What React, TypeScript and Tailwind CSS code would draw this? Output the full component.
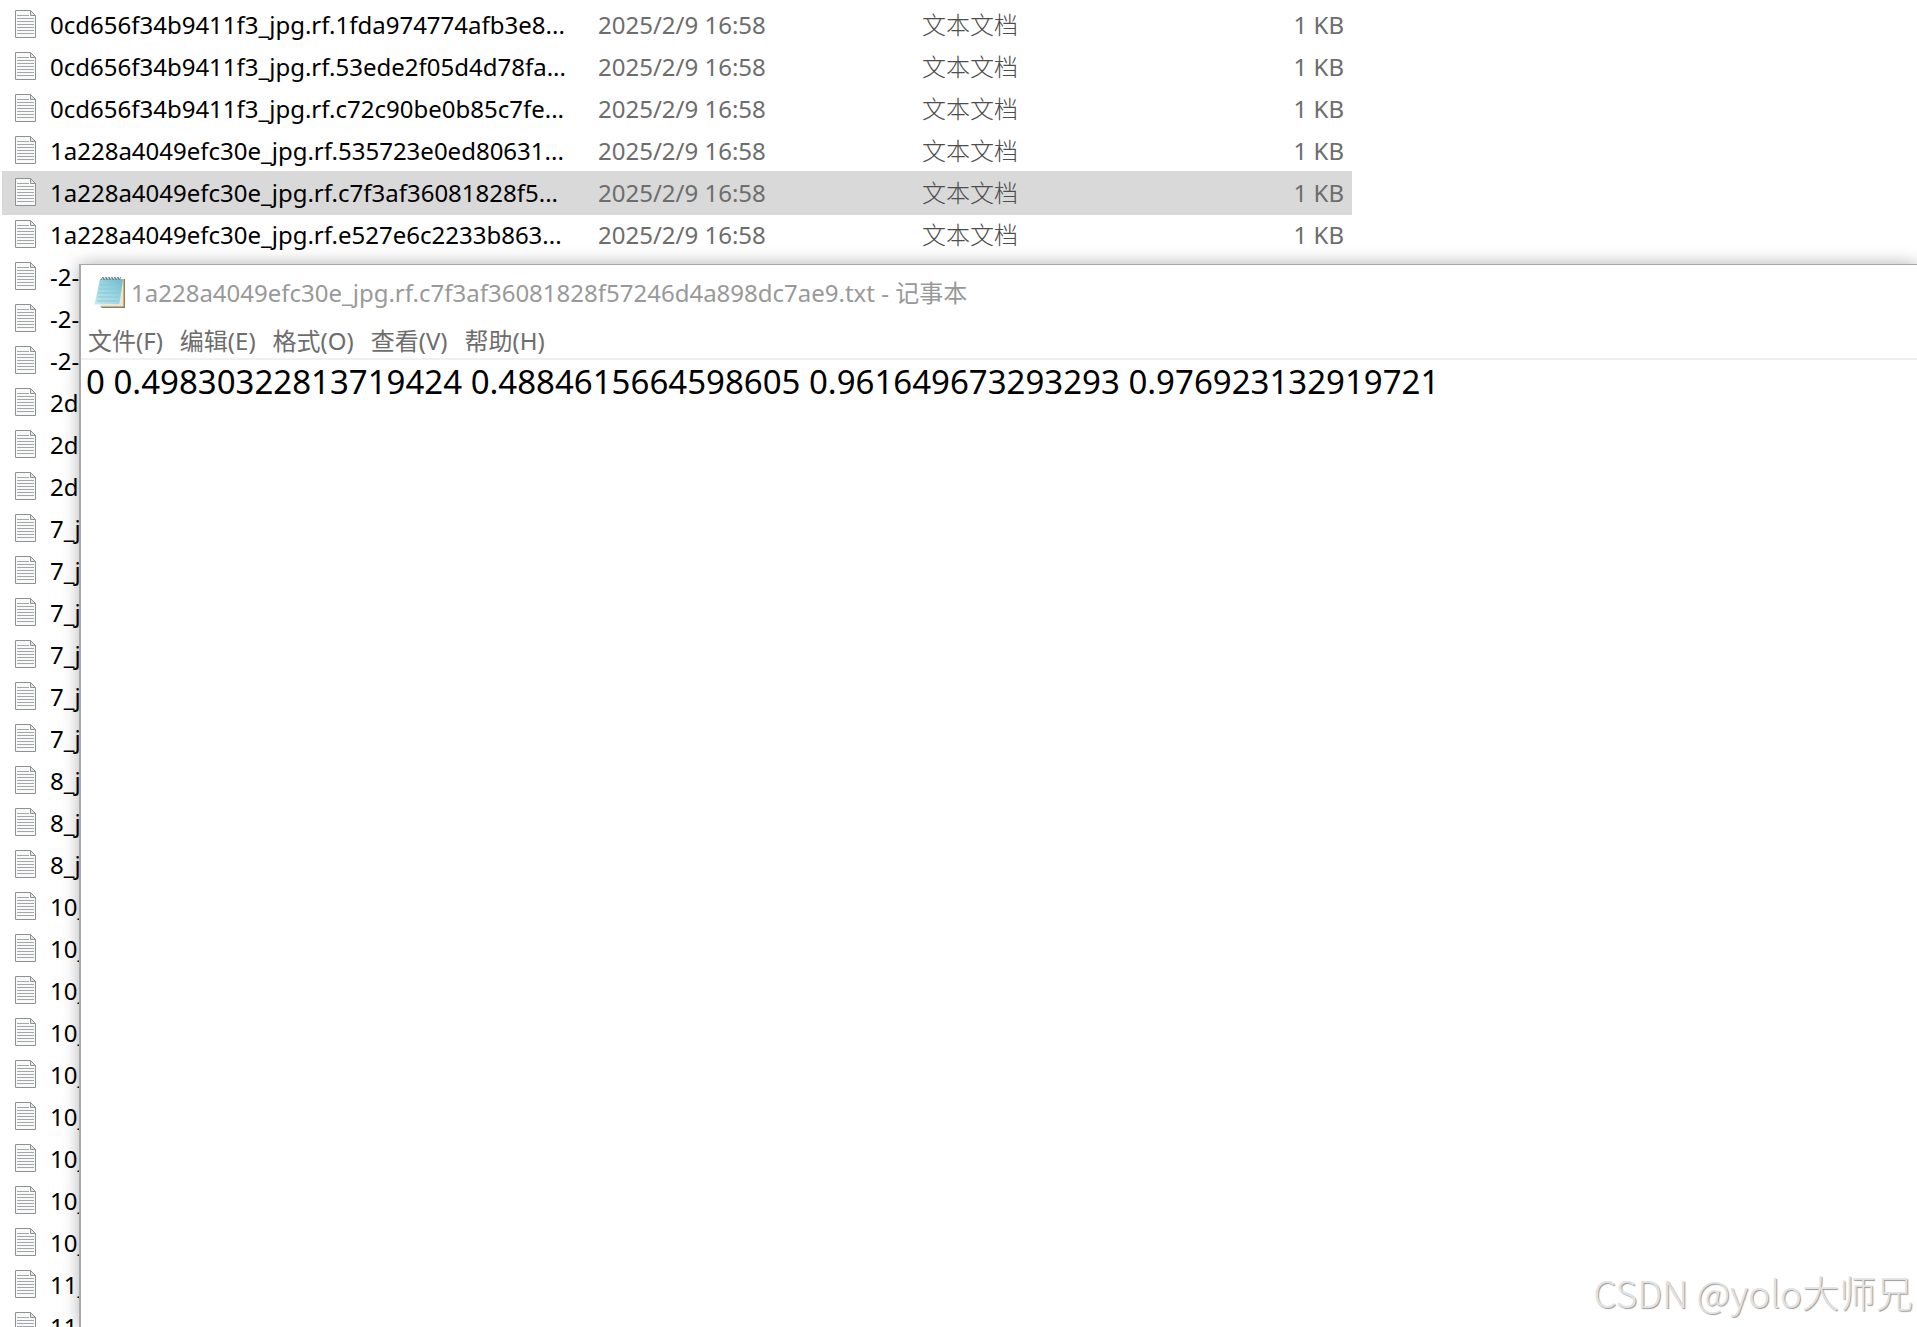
import React, { useState } from 'react';

const DATE = '2025/2/9 16:58';
const TYPE = '文本文档';
const SIZE = '1 KB';

interface FileRow {
    name: string;
    date?: string;
    type?: string;
    size?: string;
}

const DETAILS = { date: DATE, type: TYPE, size: SIZE };

const FILES: FileRow[] = [
    { name: '0cd656f34b9411f3_jpg.rf.1fda974774afb3e8...', ...DETAILS },
    { name: '0cd656f34b9411f3_jpg.rf.53ede2f05d4d78fa...', ...DETAILS },
    { name: '0cd656f34b9411f3_jpg.rf.c72c90be0b85c7fe...', ...DETAILS },
    { name: '1a228a4049efc30e_jpg.rf.535723e0ed80631...', ...DETAILS },
    { name: '1a228a4049efc30e_jpg.rf.c7f3af36081828f5...', ...DETAILS },
    { name: '1a228a4049efc30e_jpg.rf.e527e6c2233b863...', ...DETAILS },
    ...['-2-', '-2-', '-2-'].map((name) => ({ name })),
    ...['2d', '2d', '2d'].map((name) => ({ name })),
    ...['7_j', '7_j', '7_j', '7_j', '7_j', '7_j'].map((name) => ({ name })),
    ...['8_j', '8_j', '8_j'].map((name) => ({ name })),
    ...['10_', '10_', '10_', '10_', '10_', '10_', '10_', '10_', '10_'].map((name) => ({ name })),
    ...['11_', '11_'].map((name) => ({ name })),
];

const SELECTED = 4;

const MENUS = ['文件(F)', '编辑(E)', '格式(O)', '查看(V)', '帮助(H)'];

const TextFileIcon: React.FC = () => (
    <svg width="22" height="28" viewBox="0 0 22 28" className="block" aria-hidden="true">
        <path d="M.5 .5H15.5L20.5 5.5V27.5H.5Z" fill="#f8f9f9" stroke="#8f9191" />
        <path d="M15.5 .5V5.5H20.5Z" fill="#e4e5e5" stroke="#8f9191" />
        <path
            d="M2 5.5H14M2 8.5H19M2 11.5H19M2 14.5H19M2 17.5H19M2 20.5H19M2 23.5H19"
            stroke="#a3a7a9"
            fill="none"
        />
    </svg>
);

const NotepadIcon: React.FC = () => (
    <svg width="32" height="34" viewBox="0 0 32 34" className="block shrink-0" aria-hidden="true">
        <defs>
            <linearGradient id="sheet" x1="1" y1="0" x2="0" y2="1">
                <stop offset="0" stopColor="#6fb9cc" />
                <stop offset="0.5" stopColor="#9bd6e2" />
                <stop offset="1" stopColor="#c4ecf2" />
            </linearGradient>
        </defs>
        <path d="M28 3H31V32H8L6 30H27Z" fill="#93805a" />
        <path d="M27 3H29.5V30.5H6V29H26Z" fill="#efe6c9" />
        <path d="M6 3H29L25.5 28.5H0.5Z" fill="url(#sheet)" />
        <path d="M6 9H26M5 13H25.5M4 17H25M4 21H24.5M3 25H24" stroke="#8ac6d4" strokeWidth="1" fill="none" />
        <path
            d="M7 4L9 1L10 4L12 1L13 4L15 1L16 4L18 1L19 4L21 1L22 4L24 1L25 4L27 1"
            stroke="#6d8087"
            strokeWidth="1"
            fill="none"
        />
    </svg>
);

const FileList: React.FC = () => (
    <table className="ml-[2px] mt-[3px] w-[1350px] table-fixed border-collapse text-2xl leading-10 whitespace-nowrap">
        <colgroup>
            <col className="w-[48px]" />
            <col className="w-[548px]" />
            <col className="w-[324px]" />
            <col className="w-[200px]" />
            <col />
        </colgroup>
        <tbody>
            {FILES.map((file, i) => (
                <tr key={i} className={i === SELECTED ? 'h-[42px] bg-[#d9d9d9] shadow-[0_2px_#d9d9d9]' : 'h-[42px]'}>
                    <td className="p-0 pl-[13px]"><TextFileIcon /></td>
                    <td className="p-0 pt-0.5 text-black">{file.name}</td>
                    <td className="p-0 pt-0.5 text-[#6d6d6d]">{file.date}</td>
                    <td className="p-0 pt-0.5 font-light text-[#4d4d4d]">{file.type}</td>
                    <td className="p-0 pt-0.5 pr-2 text-right text-[#6d6d6d]">{file.size}</td>
                </tr>
            ))}
        </tbody>
    </table>
);

const NotepadWindow: React.FC = () => {
    const [text, setText] = useState('0 0.49830322813719424 0.4884615664598605 0.961649673293293 0.976923132919721');

    return (
        <section className="absolute top-[264px] right-0 bottom-0 left-[79px] flex flex-col border-t border-l-2 border-[#a9a9a9] bg-white shadow-[0_0_16px_rgba(0,0,0,0.3)]">
            <header className="flex h-14 items-center pl-[13px] text-2xl text-[#999999]">
                <NotepadIcon />
                <h1 className="ml-[5px] whitespace-nowrap">1a228a4049efc30e_jpg.rf.c7f3af36081828f57246d4a898dc7ae9.txt - 记事本</h1>
            </header>
            <nav className="flex h-[39px] items-center gap-[17px] border-b-2 border-[#f0f0f0] pt-0.5 pl-[7px] text-2xl text-[#6d6d6d]">
                {MENUS.map((menu) => (
                    <button key={menu} type="button" className="whitespace-nowrap">{menu}</button>
                ))}
            </nav>
            <textarea
                className="w-full flex-1 resize-none overflow-hidden bg-white pl-[5px] text-[33px] leading-[44px] text-black outline-none"
                aria-label="Text"
                spellCheck={false}
                value={text}
                onChange={(e) => setText(e.target.value)}
            />
        </section>
    );
};

const App: React.FC = () => {
    return (
        <main className="relative h-screen overflow-hidden bg-white font-['Noto_Sans','Noto_Sans_CJK_SC',sans-serif]">
            <FileList />
            <NotepadWindow />
            <p className="absolute right-1 bottom-2 font-['Noto_Sans_CJK_SC',sans-serif] text-[37px] leading-[54px] font-light text-[#e2e2e2] [text-shadow:1px_1px_1px_#999999]">
                CSDN @yolo大师兄
            </p>
        </main>
    );
};

export default App;
